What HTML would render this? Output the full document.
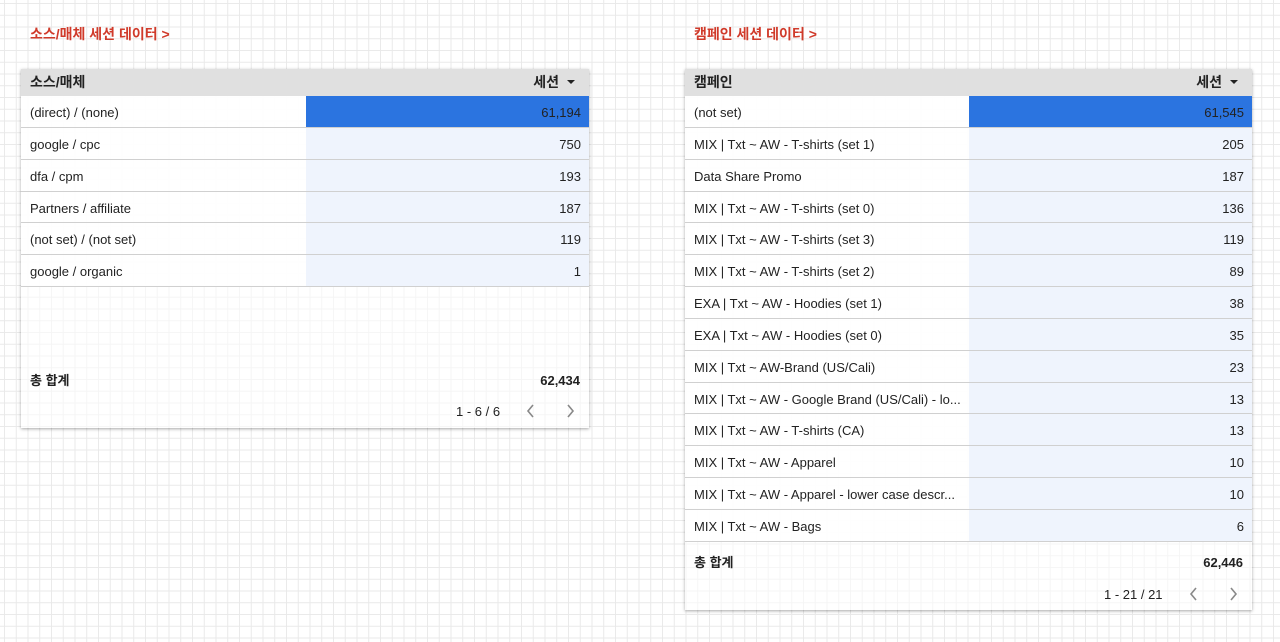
<!DOCTYPE html>
<html><head><meta charset="utf-8"><style>
*{margin:0;padding:0;box-sizing:border-box}
body{width:1280px;height:642px;overflow:hidden;position:relative;background-color:#fff;
background-image:linear-gradient(to right,#e9e9e9 1px,transparent 1px),linear-gradient(to bottom,#e9e9e9 1px,transparent 1px);
background-size:11.75px 11.75px;background-position:4px 3px;
font-family:"Liberation Sans","Noto Sans CJK KR",sans-serif;color:#222;font-size:13px}
.title{position:absolute;top:24px;color:#d03a2a;font-weight:bold;font-size:14px}
.tbl{position:absolute;top:69px;box-shadow:0 1px 3px rgba(0,0,0,.35);background:rgba(255,255,255,.55)}
.hd{height:27px;background:#e0e0e0;position:relative;font-weight:bold;font-size:14px}
.hd .l{position:absolute;left:9px;top:3px}
.hd .r{position:absolute;right:14px;top:3px}
.hd .r:after{content:"";display:inline-block;margin-left:8px;border-left:4px solid transparent;border-right:4px solid transparent;border-top:4px solid #222;vertical-align:3px}
.row{height:31.85px;position:relative;border-bottom:1px solid #d0d0d0;background:rgba(255,255,255,.85)}
.row .l{position:absolute;left:9px;top:9px;white-space:nowrap}
.row .bar{position:absolute;top:0;bottom:0;right:0;background:rgba(232,240,252,.7)}
.row .bar.b{background:#2b74e0;top:0}
.row .r{position:absolute;right:8px;top:9px}
.tot{position:absolute;font-weight:bold;line-height:16px}
.pg{position:absolute;font-size:13px}
.ar{position:absolute}
</style></head><body>
<div class="title" style="left:30px">소스/매체 세션 데이터 &gt;</div>
<div class="title" style="left:694px">캠페인 세션 데이터 &gt;</div>

<div class="tbl" style="left:21px;width:568px;height:359px">
<div class="hd"><span class="l">소스/매체</span><span class="r">세션</span></div>
<div class="row"><div class="bar b" style="width:283px"></div><span class="l">(direct) / (none)</span><span class="r">61,194</span></div>
<div class="row"><div class="bar" style="width:283px"></div><span class="l">google / cpc</span><span class="r">750</span></div>
<div class="row"><div class="bar" style="width:283px"></div><span class="l">dfa / cpm</span><span class="r">193</span></div>
<div class="row"><div class="bar" style="width:283px"></div><span class="l">Partners / affiliate</span><span class="r">187</span></div>
<div class="row"><div class="bar" style="width:283px"></div><span class="l">(not set) / (not set)</span><span class="r">119</span></div>
<div class="row"><div class="bar" style="width:283px"></div><span class="l">google / organic</span><span class="r">1</span></div>
<div class="tot" style="left:9px;top:304px">총 합계</div>
<div class="tot" style="right:9px;top:304px">62,434</div>
<div class="pg" style="left:435px;top:335px">1 - 6 / 6</div>
<svg class="ar" style="left:504px;top:334px" width="12" height="16"><path d="M8 2L3 8L8 14" fill="none" stroke="#888" stroke-width="1.6"/></svg>
<svg class="ar" style="left:543px;top:334px" width="12" height="16"><path d="M4 2L9 8L4 14" fill="none" stroke="#888" stroke-width="1.6"/></svg>
</div>

<div class="tbl" style="left:685px;width:567px;height:541px">
<div class="hd"><span class="l">캠페인</span><span class="r">세션</span></div>
<div class="row"><div class="bar b" style="width:283px"></div><span class="l">(not set)</span><span class="r">61,545</span></div>
<div class="row"><div class="bar" style="width:283px"></div><span class="l">MIX | Txt ~ AW - T-shirts (set 1)</span><span class="r">205</span></div>
<div class="row"><div class="bar" style="width:283px"></div><span class="l">Data Share Promo</span><span class="r">187</span></div>
<div class="row"><div class="bar" style="width:283px"></div><span class="l">MIX | Txt ~ AW - T-shirts (set 0)</span><span class="r">136</span></div>
<div class="row"><div class="bar" style="width:283px"></div><span class="l">MIX | Txt ~ AW - T-shirts (set 3)</span><span class="r">119</span></div>
<div class="row"><div class="bar" style="width:283px"></div><span class="l">MIX | Txt ~ AW - T-shirts (set 2)</span><span class="r">89</span></div>
<div class="row"><div class="bar" style="width:283px"></div><span class="l">EXA | Txt ~ AW - Hoodies (set 1)</span><span class="r">38</span></div>
<div class="row"><div class="bar" style="width:283px"></div><span class="l">EXA | Txt ~ AW - Hoodies (set 0)</span><span class="r">35</span></div>
<div class="row"><div class="bar" style="width:283px"></div><span class="l">MIX | Txt ~ AW-Brand (US/Cali)</span><span class="r">23</span></div>
<div class="row"><div class="bar" style="width:283px"></div><span class="l">MIX | Txt ~ AW - Google Brand (US/Cali) - lo...</span><span class="r">13</span></div>
<div class="row"><div class="bar" style="width:283px"></div><span class="l">MIX | Txt ~ AW - T-shirts (CA)</span><span class="r">13</span></div>
<div class="row"><div class="bar" style="width:283px"></div><span class="l">MIX | Txt ~ AW - Apparel</span><span class="r">10</span></div>
<div class="row"><div class="bar" style="width:283px"></div><span class="l">MIX | Txt ~ AW - Apparel - lower case descr...</span><span class="r">10</span></div>
<div class="row"><div class="bar" style="width:283px"></div><span class="l">MIX | Txt ~ AW - Bags</span><span class="r">6</span></div>
<div class="tot" style="left:9px;top:486px">총 합계</div>
<div class="tot" style="right:9px;top:486px">62,446</div>
<div class="pg" style="left:419px;top:518px">1 - 21 / 21</div>
<svg class="ar" style="left:503px;top:517px" width="12" height="16"><path d="M8 2L3 8L8 14" fill="none" stroke="#888" stroke-width="1.6"/></svg>
<svg class="ar" style="left:542px;top:517px" width="12" height="16"><path d="M4 2L9 8L4 14" fill="none" stroke="#888" stroke-width="1.6"/></svg>
</div>
</body></html>
